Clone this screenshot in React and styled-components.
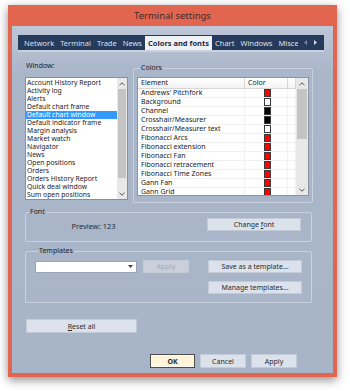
import styled, { createGlobalStyle } from 'styled-components';

const GlobalStyle = createGlobalStyle`
  html, body {
    margin: 0;
    background: #ffffff;
  }
  body {
    font-family: "Noto Sans", "Liberation Sans", sans-serif;
    font-size: 7px;
    color: #222;
  }
`;

const windows = [
  'Account History Report',
  'Activity log',
  'Alerts',
  'Default chart frame',
  'Default chart window',
  'Default indicator frame',
  'Margin analysis',
  'Market watch',
  'Navigator',
  'News',
  'Open positions',
  'Orders',
  'Orders History Report',
  'Quick deal window',
  'Sum open positions',
];

const elements = [
  ["Andrews' Pitchfork", '#ff0000'],
  ['Background', '#ffffff'],
  ['Channel', '#000000'],
  ['Crosshair/Measurer', '#000000'],
  ['Crosshair/Measurer text', '#ffffff'],
  ['Fibonacci Arcs', '#ff0000'],
  ['Fibonacci extension', '#ff0000'],
  ['Fibonacci Fan', '#ff0000'],
  ['Fibonacci retracement', '#ff0000'],
  ['Fibonacci Time Zones', '#ff0000'],
  ['Gann Fan', '#ff0000'],
  ['Gann Grid', '#ff0000'],
];

const tabs = ['Network', 'Terminal', 'Trade', 'News', 'Colors and fonts', 'Chart', 'Windows', 'Miscellaneous'];

const Stage = styled.div`
  width: 350px;
  height: 391px;
  padding: 5px 0 0 8px;
  box-sizing: border-box;
`;

const Window = styled.div`
  width: 329px;
  height: 372px;
  box-sizing: border-box;
  background: #e2654f;
  padding: 0 4px 4px;
  display: flex;
  flex-direction: column;
  box-shadow: 0 3px 9px rgba(0, 0, 0, 0.45);
`;

const TitleBar = styled.div`
  height: 21px;
  display: flex;
  align-items: center;
  justify-content: center;
  font-size: 9.5px;
  color: #3e2a2a;
`;

const Client = styled.div`
  flex: 1;
  background: linear-gradient(#bdc7d7 0, #aab6ca 45px, #a8b4c8 100%);
  padding: 9px 9px 0 6px;
  display: flex;
  flex-direction: column;
`;

const TabStrip = styled.div`
  height: 15px;
  background: #263a5c;
  border-bottom: 2px solid #c9d1de;
  display: flex;
  padding-left: 3px;
`;

const TabList = styled.div`
  flex: 1;
  min-width: 0;
  display: flex;
  overflow: hidden;
`;

const Tab = styled.div`
  flex-shrink: 0;
  display: flex;
  align-items: center;
  padding: 0 3px;
  font-size: 7.5px;
  font-weight: ${(p) => (p.$active ? 700 : 400)};
  color: ${(p) => (p.$active ? '#1d2a40' : '#dbe2ed')};
  background: ${(p) => (p.$active ? '#eef1f6' : 'transparent')};
  margin-top: ${(p) => (p.$active ? '1px' : '0')};
`;

const TabArrows = styled.div`
  display: flex;
  align-items: center;
  gap: 7px;
  padding: 0 7px 0 6px;
`;

const Page = styled.div`
  padding: 9px 0 0 7px;
  display: flex;
  flex-direction: column;
`;

const TopRow = styled.div`
  display: flex;
  align-items: flex-start;
  gap: 5px;
`;

const WindowColumn = styled.div`
  width: 103px;
  display: flex;
  flex-direction: column;
`;

const Caption = styled.div`
  font-size: 7px;
  line-height: 9px;
  margin-bottom: 7px;
  padding-left: 1px;
`;

const ListBox = styled.div`
  height: 123px;
  box-sizing: border-box;
  border: 1px solid #858fa0;
  background: #fff;
  display: flex;
`;

const Items = styled.div`
  flex: 1;
  padding-top: 1px;
  overflow: hidden;
`;

const Item = styled.div`
  height: 8px;
  line-height: 8px;
  font-size: 6.8px;
  padding-left: 1px;
  white-space: nowrap;
  background: ${(p) => (p.$selected ? '#3399ff' : 'transparent')};
  color: ${(p) => (p.$selected ? '#fff' : '#1a1a1a')};
`;

const ScrollBar = styled.div`
  width: ${(p) => p.$w}px;
  background: #e8e8e8;
  display: flex;
  flex-direction: column;
`;

const ScrollArrow = styled.div`
  height: 11px;
  display: flex;
  align-items: center;
  justify-content: center;
`;

const Thumb = styled.div`
  margin: 0 1px;
  background: #c4c4c4;
`;

const Track = styled.div`
  flex: 1;
`;

const Group = styled.fieldset`
  margin: ${(p) => p.$mt || 0}px 0 0;
  width: ${(p) => p.$w}px;
  height: ${(p) => p.$h}px;
  box-sizing: border-box;
  border: 1px solid #c9d1de;
  border-radius: 2px;
  padding: ${(p) => p.$pad};
  min-width: 0;
`;

const Legend = styled.legend`
  font-size: 7px;
  line-height: 10px;
  padding: 0 1px;
  margin-left: 3px;
  color: #222;
`;

const ListView = styled.div`
  height: 119px;
  box-sizing: border-box;
  border: 1px solid #8a94a6;
  background: #fff;
  display: flex;
  overflow: hidden;
`;

const LvMain = styled.div`
  flex: 1;
  overflow: hidden;
`;

const LvRow = styled.div`
  display: grid;
  grid-template-columns: 107px 43px 1fr;
  height: ${(p) => (p.$head ? 11 : 9)}px;
  box-sizing: border-box;
  border-bottom: 1px solid ${(p) => (p.$head ? '#d6d6d6' : '#f0f0f0')};
  background: ${(p) => (p.$head ? 'linear-gradient(#ffffff, #f2f2f2)' : 'transparent')};
  font-size: 7px;
`;

const LvCell = styled.div`
  padding-left: 3px;
  line-height: ${(p) => (p.$head ? 10 : 8)}px;
  white-space: nowrap;
  overflow: hidden;
  border-right: 1px solid ${(p) => (p.$head ? '#d6d6d6' : '#f3f3f3')};
  display: flex;
  align-items: center;
  justify-content: ${(p) => (p.$center ? 'center' : 'flex-start')};
`;

const Swatch = styled.span`
  width: 5px;
  height: 6px;
  border: 1px solid #3a3a3a;
  background: ${(p) => p.$color};
`;

const FontRow = styled.div`
  display: flex;
  align-items: center;
  height: 13px;
`;

const Preview = styled.div`
  width: 135px;
  text-align: center;
  font-size: 7.5px;
  color: #2e2e2e;
  margin-top: 3px;
`;

const Button = styled.button`
  width: ${(p) => p.$w}px;
  height: ${(p) => p.$h || 13}px;
  box-sizing: border-box;
  padding: 0;
  margin: 0;
  font-family: "Noto Sans", "Liberation Sans", sans-serif;
  font-size: 7px;
  font-weight: ${(p) => (p.$default ? 700 : 400)};
  color: ${(p) => (p.disabled ? '#a3abb8' : '#2a2a2a')};
  background: ${(p) => (p.$default ? '#fdf4da' : p.disabled ? '#c9d0dc' : '#dce2eb')};
  border: 1px solid ${(p) => (p.$default ? '#4d4d4d' : '#c3cbd7')};
  box-shadow: ${(p) => (p.$default ? 'inset 0 0 0 1px #fffaf0' : 'none')};
  margin-left: ${(p) => (p.$push ? 'auto' : '0')};
`;

const TemplateGrid = styled.div`
  display: grid;
  grid-template-columns: 102px 46px 1fr;
  column-gap: 6px;
  row-gap: 8px;
  align-items: center;
`;

const Combo = styled.div`
  height: 12px;
  box-sizing: border-box;
  border: 1px solid #9ba5b5;
  background: #fff;
  display: flex;
  justify-content: flex-end;
  align-items: center;
  padding-right: 3px;
`;

const RightCell = styled.div`
  grid-column: 3;
  display: flex;
  justify-content: flex-end;
`;

const ResetRow = styled.div`
  margin: 16px 0 0 1px;
  display: flex;
`;

const BottomBar = styled.div`
  margin-top: 21px;
  display: flex;
  justify-content: flex-end;
  gap: 5px;
  padding-right: 27px;
`;

function Chevron({ down }) {
  return (
    <svg width="6" height="4" viewBox="0 0 6 4">
      <polyline
        points={down ? '0.5,0.8 3,3.2 5.5,0.8' : '0.5,3.2 3,0.8 5.5,3.2'}
        fill="none"
        stroke="#555"
        strokeWidth="1"
      />
    </svg>
  );
}

function Triangle({ dir, color }) {
  return (
    <svg width="3" height="5" viewBox="0 0 3 5">
      <polygon points={dir === 'left' ? '3,0 0,2.5 3,5' : '0,0 3,2.5 0,5'} fill={color} />
    </svg>
  );
}

export default function App() {
  return (
    <Stage>
      <GlobalStyle />
      <Window>
        <TitleBar>Terminal settings</TitleBar>
        <Client>
          <TabStrip>
            <TabList>
              {tabs.map((t) => (
                <Tab key={t} $active={t === 'Colors and fonts'}>{t}</Tab>
              ))}
            </TabList>
            <TabArrows>
              <Triangle dir="left" color="#7486a3" />
              <Triangle dir="right" color="#d9e0eb" />
            </TabArrows>
          </TabStrip>

          <Page>
            <TopRow>
              <WindowColumn>
                <Caption>Window:</Caption>
                <ListBox>
                  <Items>
                    {windows.map((w) => (
                      <Item key={w} $selected={w === 'Default chart window'}>{w}</Item>
                    ))}
                  </Items>
                  <ScrollBar $w={10}>
                    <ScrollArrow><Chevron /></ScrollArrow>
                    <Thumb style={{ height: 89 }} />
                    <Track />
                    <ScrollArrow><Chevron down /></ScrollArrow>
                  </ScrollBar>
                </ListBox>
              </WindowColumn>

              <Group $w={180} $h={140} $mt={2} $pad="4px 3px 4px">
                <Legend>Colors</Legend>
                <ListView>
                  <LvMain>
                    <LvRow $head>
                      <LvCell $head>Element</LvCell>
                      <LvCell $head>Color</LvCell>
                      <LvCell $head />
                    </LvRow>
                    {elements.map(([name, color]) => (
                      <LvRow key={name}>
                        <LvCell>{name}</LvCell>
                        <LvCell $center><Swatch $color={color} /></LvCell>
                        <LvCell />
                      </LvRow>
                    ))}
                  </LvMain>
                  <ScrollBar $w={12}>
                    <ScrollArrow><Chevron /></ScrollArrow>
                    <Thumb style={{ height: 50 }} />
                    <Track />
                    <ScrollArrow><Chevron down /></ScrollArrow>
                  </ScrollBar>
                </ListView>
              </Group>
            </TopRow>

            <Group $w={287} $h={35} $mt={4} $pad="1px 10px 0 0">
              <Legend>Font</Legend>
              <FontRow>
                <Preview>Preview: 123</Preview>
                <Button $w={94} $push>Change <u>f</u>ont</Button>
              </FontRow>
            </Group>

            <Group $w={287} $h={57} $mt={4} $pad="4px 9px 0 9px">
              <Legend>Templates</Legend>
              <TemplateGrid>
                <Combo>
                  <svg width="5" height="3" viewBox="0 0 5 3">
                    <polygon points="0,0 5,0 2.5,3" fill="#444" />
                  </svg>
                </Combo>
                <Button $w={46} disabled>Apply</Button>
                <RightCell><Button $w={94}>Save as a template...</Button></RightCell>
                <RightCell><Button $w={94}>Manage templates...</Button></RightCell>
              </TemplateGrid>
            </Group>

            <ResetRow>
              <Button $w={111} $h={14}><u>R</u>eset all</Button>
            </ResetRow>

            <BottomBar>
              <Button $w={45} $h={14} $default>OK</Button>
              <Button $w={46} $h={14}>Cancel</Button>
              <Button $w={46} $h={14}>Apply</Button>
            </BottomBar>
          </Page>
        </Client>
      </Window>
    </Stage>
  );
}
